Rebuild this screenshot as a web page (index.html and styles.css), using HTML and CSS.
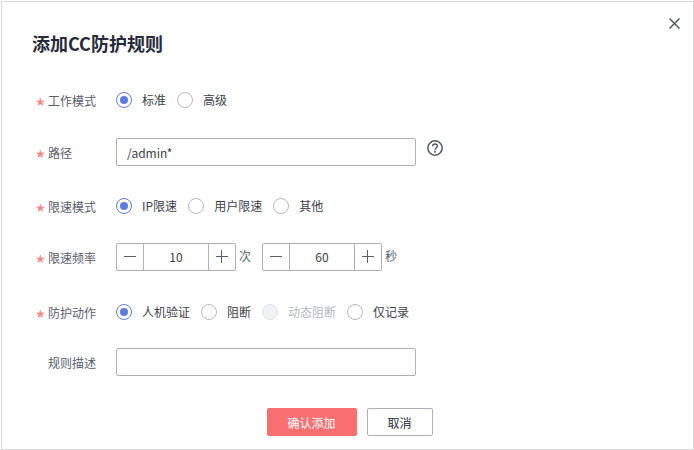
FILE: index.html
```html
<!DOCTYPE html>
<html lang="zh-CN">
<head>
    <meta charset="UTF-8">
    <meta name="viewport" content="width=device-width, initial-scale=1.0">
    <title>添加CC防护规则</title>
    <link rel="stylesheet" href="styles.css">
</head>
<body>
    <div class="dialog">
        <button class="close" aria-label="关闭">
            <svg width="11" height="11" viewBox="0 0 11 11"><path d="M.5.5l10 10M10.5.5l-10 10" fill="none" stroke="#4f5666" stroke-width="1.5"/></svg>
        </button>
        <h2 class="title">添加CC防护规则</h2>

        <div class="row row-radio row-mode">
            <label class="label required">工作模式</label>
            <div class="radios">
                <span class="radio checked"></span><span class="radio-text">标准</span>
                <span class="radio"></span><span class="radio-text">高级</span>
            </div>
        </div>

        <div class="row">
            <label class="label required">路径</label>
            <input class="input" type="text" value="/admin*">
            <svg class="help" width="16" height="16" viewBox="0 0 16 16">
                <circle cx="8" cy="8" r="7.2" fill="none" stroke="#4f5666" stroke-width="1.5"/>
                <path d="M5.6 6.2C5.7 4.8 6.8 4 8 4c1.4 0 2.4.8 2.4 2 0 1.9-2.4 1.8-2.4 3.8" fill="none" stroke="#4f5666" stroke-width="1.4"/>
                <circle cx="8" cy="11.7" r="1" fill="#4f5666"/>
            </svg>
        </div>

        <div class="row row-radio">
            <label class="label required">限速模式</label>
            <div class="radios">
                <span class="radio checked"></span><span class="radio-text">IP限速</span>
                <span class="radio"></span><span class="radio-text">用户限速</span>
                <span class="radio"></span><span class="radio-text">其他</span>
            </div>
        </div>

        <div class="row row-rate">
            <label class="label required">限速频率</label>
            <div class="stepper">
                <span class="step"><i class="minus"></i></span>
                <span class="step-value">10</span>
                <span class="step"><i class="plus"></i></span>
            </div>
            <span class="unit">次</span>
            <div class="stepper">
                <span class="step"><i class="minus"></i></span>
                <span class="step-value">60</span>
                <span class="step"><i class="plus"></i></span>
            </div>
            <span class="unit">秒</span>
        </div>

        <div class="row row-radio row-action">
            <label class="label required">防护动作</label>
            <div class="radios">
                <span class="radio checked"></span><span class="radio-text">人机验证</span>
                <span class="radio"></span><span class="radio-text">阻断</span>
                <span class="radio disabled"></span><span class="radio-text muted">动态阻断</span>
                <span class="radio"></span><span class="radio-text">仅记录</span>
            </div>
        </div>

        <div class="row">
            <label class="label">规则描述</label>
            <input class="input" type="text">
        </div>

        <div class="footer">
            <button class="btn btn-primary">确认添加</button>
            <button class="btn">取消</button>
        </div>
    </div>
</body>
</html>
```

FILE: styles.css
```css
* {
    box-sizing: border-box;
}

html, body {
    margin: 0;
    padding: 0;
    background-color: #fff;
}

body {
    font-family: "Noto Sans CJK SC", "Open Sans", sans-serif;
    font-size: 12px;
    color: #3c3f4a;
}

.dialog {
    position: relative;
    width: 693px;
    height: 449px;
    margin: 1px 0 0 1px;
    padding: 27px 0 0 0;
    border: 1px solid #d9d9d9;
}

.close {
    position: absolute;
    top: 16px;
    right: 13px;
    width: 11px;
    height: 11px;
    padding: 0;
    border: none;
    background: none;
    line-height: 0;
}

.title {
    margin: 0 0 28px 30px;
    height: 28px;
    font-size: 18px;
    line-height: 28px;
    font-weight: 700;
    color: #252b3a;
}

.row {
    display: flex;
    align-items: center;
    height: 28px;
    margin-bottom: 25px;
}

.row-rate {
    margin-bottom: 26px;
}

.row-radio {
    height: 30px;
    margin-bottom: 22px;
}

.row-mode {
    margin-bottom: 23px;
}

.row-action {
    margin-bottom: 21px;
}

.label {
    position: relative;
    width: 114px;
    padding-left: 46px;
    color: #575d6c;
}

.required::before {
    content: "★";
    position: absolute;
    left: 33px;
    top: 1px;
    font-family: "DejaVu Sans", sans-serif;
    font-size: 12px;
    line-height: 18px;
    color: #f98a8a;
}

.radios {
    display: flex;
    align-items: center;
}

.radio {
    position: relative;
    flex: none;
    width: 16px;
    height: 16px;
    margin-right: 10px;
    border: 1px solid #b6b8c3;
    border-radius: 50%;
}

.radio-text {
    margin-right: 11px;
    line-height: 18px;
}

.radio.checked {
    border-color: #5e7ce0;
}

.radio.checked::after {
    content: "";
    position: absolute;
    top: 3px;
    left: 3px;
    width: 8px;
    height: 8px;
    border-radius: 50%;
    background-color: #5e7ce0;
}

.radio.disabled {
    border-color: #dfe1e6;
    background-color: #f0f1f4;
}

.muted {
    color: #b4b7c0;
}

.input {
    width: 300px;
    height: 28px;
    padding: 0 10px;
    border: 1px solid #adb0b8;
    border-radius: 2px;
    font: inherit;
    color: #3c3f4a;
    outline: none;
}

.help {
    margin: -8px 0 0 11px;
}

.stepper {
    display: flex;
    width: 120px;
    height: 28px;
    border: 1px solid #adb0b8;
    border-radius: 2px;
}

.step {
    position: relative;
    flex: none;
    width: 26px;
}

.step-value {
    flex: 1;
    border-left: 1px solid #adb0b8;
    border-right: 1px solid #adb0b8;
    text-align: center;
    line-height: 26px;
}

.minus, .plus {
    position: absolute;
    top: 12px;
    left: 7px;
    width: 12px;
    height: 1px;
    background-color: #575d6c;
}

.plus::after {
    content: "";
    position: absolute;
    top: -6px;
    left: 5px;
    width: 1px;
    height: 13px;
    background-color: #575d6c;
}

.unit {
    width: 26px;
    margin-top: -4px;
    padding-left: 3px;
    color: #575d6c;
}

.footer {
    display: flex;
    justify-content: center;
    gap: 10px;
    margin-top: 32px;
    padding-left: 4px;
}

.btn {
    width: 66px;
    height: 28px;
    padding: 0;
    border: 1px solid #adb0b8;
    border-radius: 2px;
    background-color: #fff;
    font: inherit;
    color: #252b3a;
}

.btn-primary {
    width: 90px;
    border-color: #fa7070;
    background-color: #fa7070;
    color: #fff;
}
```
